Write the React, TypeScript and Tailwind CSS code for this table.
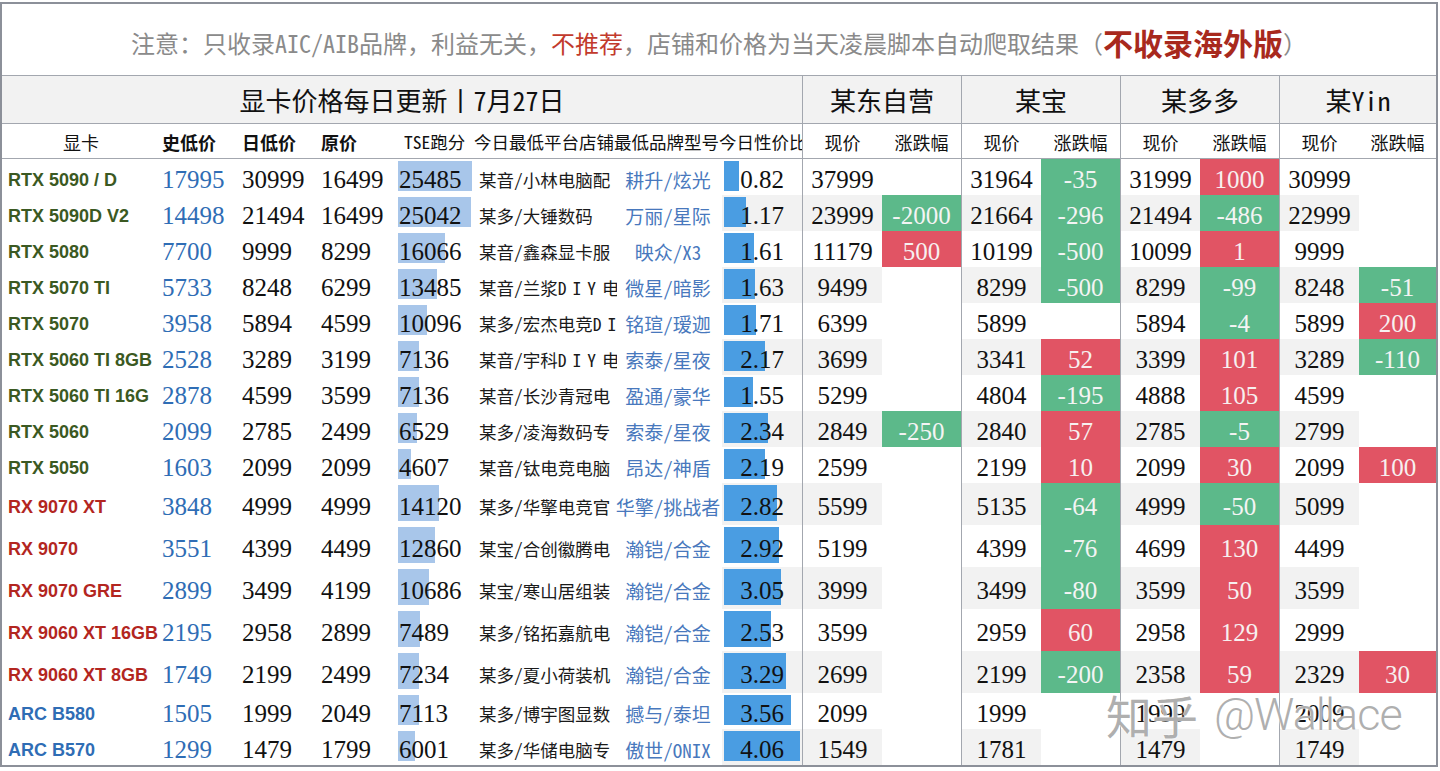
import React from "react";

type Chg = [string, "g" | "r"] | null;
interface Row {
  name: string;
  t: "n" | "a" | "i";
  low: string;
  day: string;
  orig: string;
  tse: number;
  shop: string;
  brand: string;
  ratio: string;
  p: [string, Chg][];
  tall?: boolean;
}

const rows: Row[] = [
  { name: "RTX 5090 / D", t: "n", low: "17995", day: "30999", orig: "16499", tse: 25485, shop: "某音/小林电脑配", brand: "耕升/炫光", ratio: "0.82", p: [["37999", null], ["31964", ["-35", "g"]], ["31999", ["1000", "r"]], ["30999", null]] },
  { name: "RTX 5090D V2", t: "n", low: "14498", day: "21494", orig: "16499", tse: 25042, shop: "某多/大锤数码", brand: "万丽/星际", ratio: "1.17", p: [["23999", ["-2000", "g"]], ["21664", ["-296", "g"]], ["21494", ["-486", "g"]], ["22999", null]] },
  { name: "RTX 5080", t: "n", low: "7700", day: "9999", orig: "8299", tse: 16066, shop: "某音/鑫森显卡服", brand: "映众/X3", ratio: "1.61", p: [["11179", ["500", "r"]], ["10199", ["-500", "g"]], ["10099", ["1", "r"]], ["9999", null]] },
  { name: "RTX 5070 TI", t: "n", low: "5733", day: "8248", orig: "6299", tse: 13485, shop: "某音/兰浆DIY电脑", brand: "微星/暗影", ratio: "1.63", p: [["9499", null], ["8299", ["-500", "g"]], ["8299", ["-99", "g"]], ["8248", ["-51", "g"]]] },
  { name: "RTX 5070", t: "n", low: "3958", day: "5894", orig: "4599", tse: 10096, shop: "某多/宏杰电竞DIY", brand: "铭瑄/瑷迦", ratio: "1.71", p: [["6399", null], ["5899", null], ["5894", ["-4", "g"]], ["5899", ["200", "r"]]] },
  { name: "RTX 5060 TI 8GB", t: "n", low: "2528", day: "3289", orig: "3199", tse: 7136, shop: "某音/宇科DIY电脑", brand: "索泰/星夜", ratio: "2.17", p: [["3699", null], ["3341", ["52", "r"]], ["3399", ["101", "r"]], ["3289", ["-110", "g"]]] },
  { name: "RTX 5060 TI 16G", t: "n", low: "2878", day: "4599", orig: "3599", tse: 7136, shop: "某音/长沙青冠电", brand: "盈通/豪华", ratio: "1.55", p: [["5299", null], ["4804", ["-195", "g"]], ["4888", ["105", "r"]], ["4599", null]] },
  { name: "RTX 5060", t: "n", low: "2099", day: "2785", orig: "2499", tse: 6529, shop: "某多/凌海数码专", brand: "索泰/星夜", ratio: "2.34", p: [["2849", ["-250", "g"]], ["2840", ["57", "r"]], ["2785", ["-5", "g"]], ["2799", null]] },
  { name: "RTX 5050", t: "n", low: "1603", day: "2099", orig: "2099", tse: 4607, shop: "某音/钛电竞电脑", brand: "昂达/神盾", ratio: "2.19", p: [["2599", null], ["2199", ["10", "r"]], ["2099", ["30", "r"]], ["2099", ["100", "r"]]] },
  { name: "RX 9070 XT", t: "a", tall: true, low: "3848", day: "4999", orig: "4999", tse: 14120, shop: "某多/华擎电竞官", brand: "华擎/挑战者", ratio: "2.82", p: [["5599", null], ["5135", ["-64", "g"]], ["4999", ["-50", "g"]], ["5099", null]] },
  { name: "RX 9070", t: "a", tall: true, low: "3551", day: "4399", orig: "4499", tse: 12860, shop: "某宝/合创徽腾电", brand: "瀚铠/合金", ratio: "2.92", p: [["5199", null], ["4399", ["-76", "g"]], ["4699", ["130", "r"]], ["4499", null]] },
  { name: "RX 9070 GRE", t: "a", tall: true, low: "2899", day: "3499", orig: "4199", tse: 10686, shop: "某宝/寒山居组装", brand: "瀚铠/合金", ratio: "3.05", p: [["3999", null], ["3499", ["-80", "g"]], ["3599", ["50", "r"]], ["3599", null]] },
  { name: "RX 9060 XT 16GB", t: "a", tall: true, low: "2195", day: "2958", orig: "2899", tse: 7489, shop: "某多/铭拓嘉航电", brand: "瀚铠/合金", ratio: "2.53", p: [["3599", null], ["2959", ["60", "r"]], ["2958", ["129", "r"]], ["2999", null]] },
  { name: "RX 9060 XT 8GB", t: "a", tall: true, low: "1749", day: "2199", orig: "2499", tse: 7234, shop: "某多/夏小荷装机", brand: "瀚铠/合金", ratio: "3.29", p: [["2699", null], ["2199", ["-200", "g"]], ["2358", ["59", "r"]], ["2329", ["30", "r"]]] },
  { name: "ARC B580", t: "i", low: "1505", day: "1999", orig: "2049", tse: 7113, shop: "某多/博宇图显数", brand: "撼与/泰坦", ratio: "3.56", p: [["2099", null], ["1999", null], ["1999", null], ["2009", null]] },
  { name: "ARC B570", t: "i", low: "1299", day: "1479", orig: "1799", tse: 6001, shop: "某多/华储电脑专", brand: "傲世/ONIX", ratio: "4.06", p: [["1549", null], ["1781", null], ["1479", null], ["1749", null]] },
];

const SERIF = "[font-family:'Liberation_Serif','Times_New_Roman',serif]";
const CJK = "[font-family:'Noto_Sans_Mono_CJK_SC','Noto_Sans_CJK_SC',sans-serif]";
const ARIAL = "[font-family:'Liberation_Sans',Arial,sans-serif]";

const nameCls: Record<Row["t"], string> = {
  n: "text-[#3b5922]",
  a: "text-[#b3261f]",
  i: "text-[#2f6db5]",
};

const platW: [string, string][] = [
  ["w-[80px]", "w-[79px]"],
  ["w-[80px]", "w-[79px]"],
  ["w-[80px]", "w-[79px]"],
  ["w-[80px]", "w-[77px]"],
];
const headW = ["w-[159px]", "w-[159px]", "w-[159px]", "w-[157px]"];
const platforms = ["某东自营", "某宝", "某多多", "某Yin"];

function Shop({ text }: { text: string }) {
  const parts = text.split(/(DIY)/);
  return (
    <>
      {parts.map((p, k) =>
        p === "DIY" ? (
          <span key={k} className="tracking-[6px]">
            {p}
          </span>
        ) : (
          <React.Fragment key={k}>{p}</React.Fragment>
        )
      )}
    </>
  );
}

function DataRow({ r, i }: { r: Row; i: number }) {
  const stripe = i % 2 === 1 ? "bg-[#f2f2f2]" : "bg-white";
  const tseW = (r.tse / 25485) * 74;
  const ratioW = (parseFloat(r.ratio) / 4.06) * 76;
  return (
    <div className={`flex ${r.tall ? "h-[42px]" : "h-[36px]"}`}>
      <div className={`w-[158px] shrink-0 flex items-center pl-[6px] pt-[6px] font-bold text-[18px] whitespace-nowrap ${ARIAL} ${nameCls[r.t]}`}>
        {r.name}
      </div>
      <div className={`w-[79px] shrink-0 flex items-center pl-[2px] pt-[6px] text-[25px] ${SERIF} text-[#2f6db5]`}>{r.low}</div>
      <div className={`w-[79px] shrink-0 flex items-center pl-[3px] pt-[6px] text-[25px] ${SERIF} text-[#111]`}>{r.day}</div>
      <div className={`w-[79px] shrink-0 flex items-center pl-[3px] pt-[6px] text-[25px] ${SERIF} text-[#111]`}>{r.orig}</div>
      <div className="w-[77px] shrink-0 relative flex items-center pt-[6px]">
        <div className="absolute left-[1px] top-[2px] bottom-[4px] bg-[#a8c6ea]" style={{ width: `${tseW}px` }} />
        <span className={`relative pl-[2px] text-[25px] ${SERIF} text-[#111]`}>{r.tse}</span>
      </div>
      <div className="w-[148px] shrink-0 flex items-center pl-[5px] pt-[6px]">
        <div className={`w-[138px] overflow-hidden whitespace-nowrap text-[17.5px] ${CJK} text-[#1a1a1a]`}>
          <Shop text={r.shop} />
        </div>
      </div>
      <div className={`w-[100px] shrink-0 flex items-center justify-center pr-[8px] pt-[6px] whitespace-nowrap text-[19px] ${CJK} text-[#4878bd]`}>
        {r.brand}
      </div>
      <div className={`w-[80px] shrink-0 relative flex items-center justify-center pt-[6px] ${stripe}`}>
        <div className="absolute left-[2px] top-[2px] bottom-[4px] bg-[#4a9de2]" style={{ width: `${ratioW}px` }} />
        <span className={`relative text-[25px] ${SERIF} text-[#111]`}>{r.ratio}</span>
      </div>
      {r.p.map(([now, chg], k) => (
        <React.Fragment key={k}>
          <div className={`${platW[k][0]} shrink-0 border-l border-[#a3a7af] flex items-center justify-center pt-[6px] text-[25px] ${SERIF} text-[#111] ${stripe}`}>
            {now}
          </div>
          <div
            className={`${platW[k][1]} shrink-0 flex items-center justify-center pt-[6px] text-[25px] ${SERIF} ${
              chg ? (chg[1] === "g" ? "bg-[#5cb98a] text-[#f4f4f4]" : "bg-[#e15464] text-[#f7f0f0]") : "bg-white"
            }`}
          >
            {chg ? chg[0] : ""}
          </div>
        </React.Fragment>
      ))}
    </div>
  );
}

export default function App() {
  return (
    <div className="relative w-[1440px] h-[771px] bg-white overflow-hidden pt-[2px]">
      <div className="w-[1438px] border-2 border-[#8c9099] bg-white">
        {/* note */}
        <div className={`h-[72px] border-b border-[#a3a7af] flex items-center justify-center pt-[6px] ${CJK} text-[24px] text-[#8a8a8a] whitespace-nowrap`}>
          <span>注意：只收录AIC/AIB品牌，利益无关，</span>
          <span className="text-[#c23a2c]">不推荐</span>
          <span>，店铺和价格为当天凌晨脚本自动爬取结果（</span>
          <span className="text-[30px] font-bold text-[#a8291d]">不收录海外版</span>
          <span>）</span>
        </div>
        {/* header */}
        <div className={`h-[48px] border-b border-[#a3a7af] bg-[#f2f2f2] flex ${CJK} text-[26px] text-[#111]`}>
          <div className="w-[800px] shrink-0 flex items-center justify-center">显卡价格每日更新丨7月27日</div>
          {platforms.map((p, k) => (
            <div key={p} className={`${headW[k]} shrink-0 border-l border-[#a3a7af] flex items-center justify-center`}>
              {p}
            </div>
          ))}
        </div>
        {/* subheader */}
        <div className={`h-[35px] border-b border-[#a3a7af] flex ${CJK} text-[18px] text-[#111]`}>
          <div className="w-[158px] shrink-0 flex items-center justify-center pt-[3px]">显卡</div>
          <div className="w-[79px] shrink-0 flex items-center pl-[2px] pt-[3px] font-bold">史低价</div>
          <div className="w-[79px] shrink-0 flex items-center pl-[3px] pt-[3px] font-bold">日低价</div>
          <div className="w-[79px] shrink-0 flex items-center pl-[3px] pt-[3px] font-bold">原价</div>
          <div className="w-[405px] shrink-0 flex items-center pl-[7px] pt-[3px] overflow-hidden whitespace-nowrap text-[17.5px]">
            TSE跑分 今日最低平台店铺最低品牌型号今日性价比
          </div>
          {platW.map((w, k) => (
            <React.Fragment key={k}>
              <div className={`${w[0]} shrink-0 border-l border-[#a3a7af] flex items-center justify-center pt-[3px]`}>现价</div>
              <div className={`${w[1]} shrink-0 flex items-center justify-center pt-[3px]`}>涨跌幅</div>
            </React.Fragment>
          ))}
        </div>
        {rows.map((r, i) => (
          <DataRow key={r.name} r={r} i={i} />
        ))}
      </div>
      {/* watermark */}
      <div className="absolute left-[1106px] top-[680px] pointer-events-none flex items-center whitespace-nowrap text-[rgba(140,140,140,0.7)] [text-shadow:0_0_2px_#fff,0_0_1px_#fff]">
        <span className="[font-family:'Noto_Sans_CJK_SC',sans-serif] text-[46px]">知乎</span>
        <span className="[font-family:Roboto,'Noto_Sans',sans-serif] font-light text-[45px] ml-[16px] tracking-[-1px]">@Wallace</span>
      </div>
    </div>
  );
}
